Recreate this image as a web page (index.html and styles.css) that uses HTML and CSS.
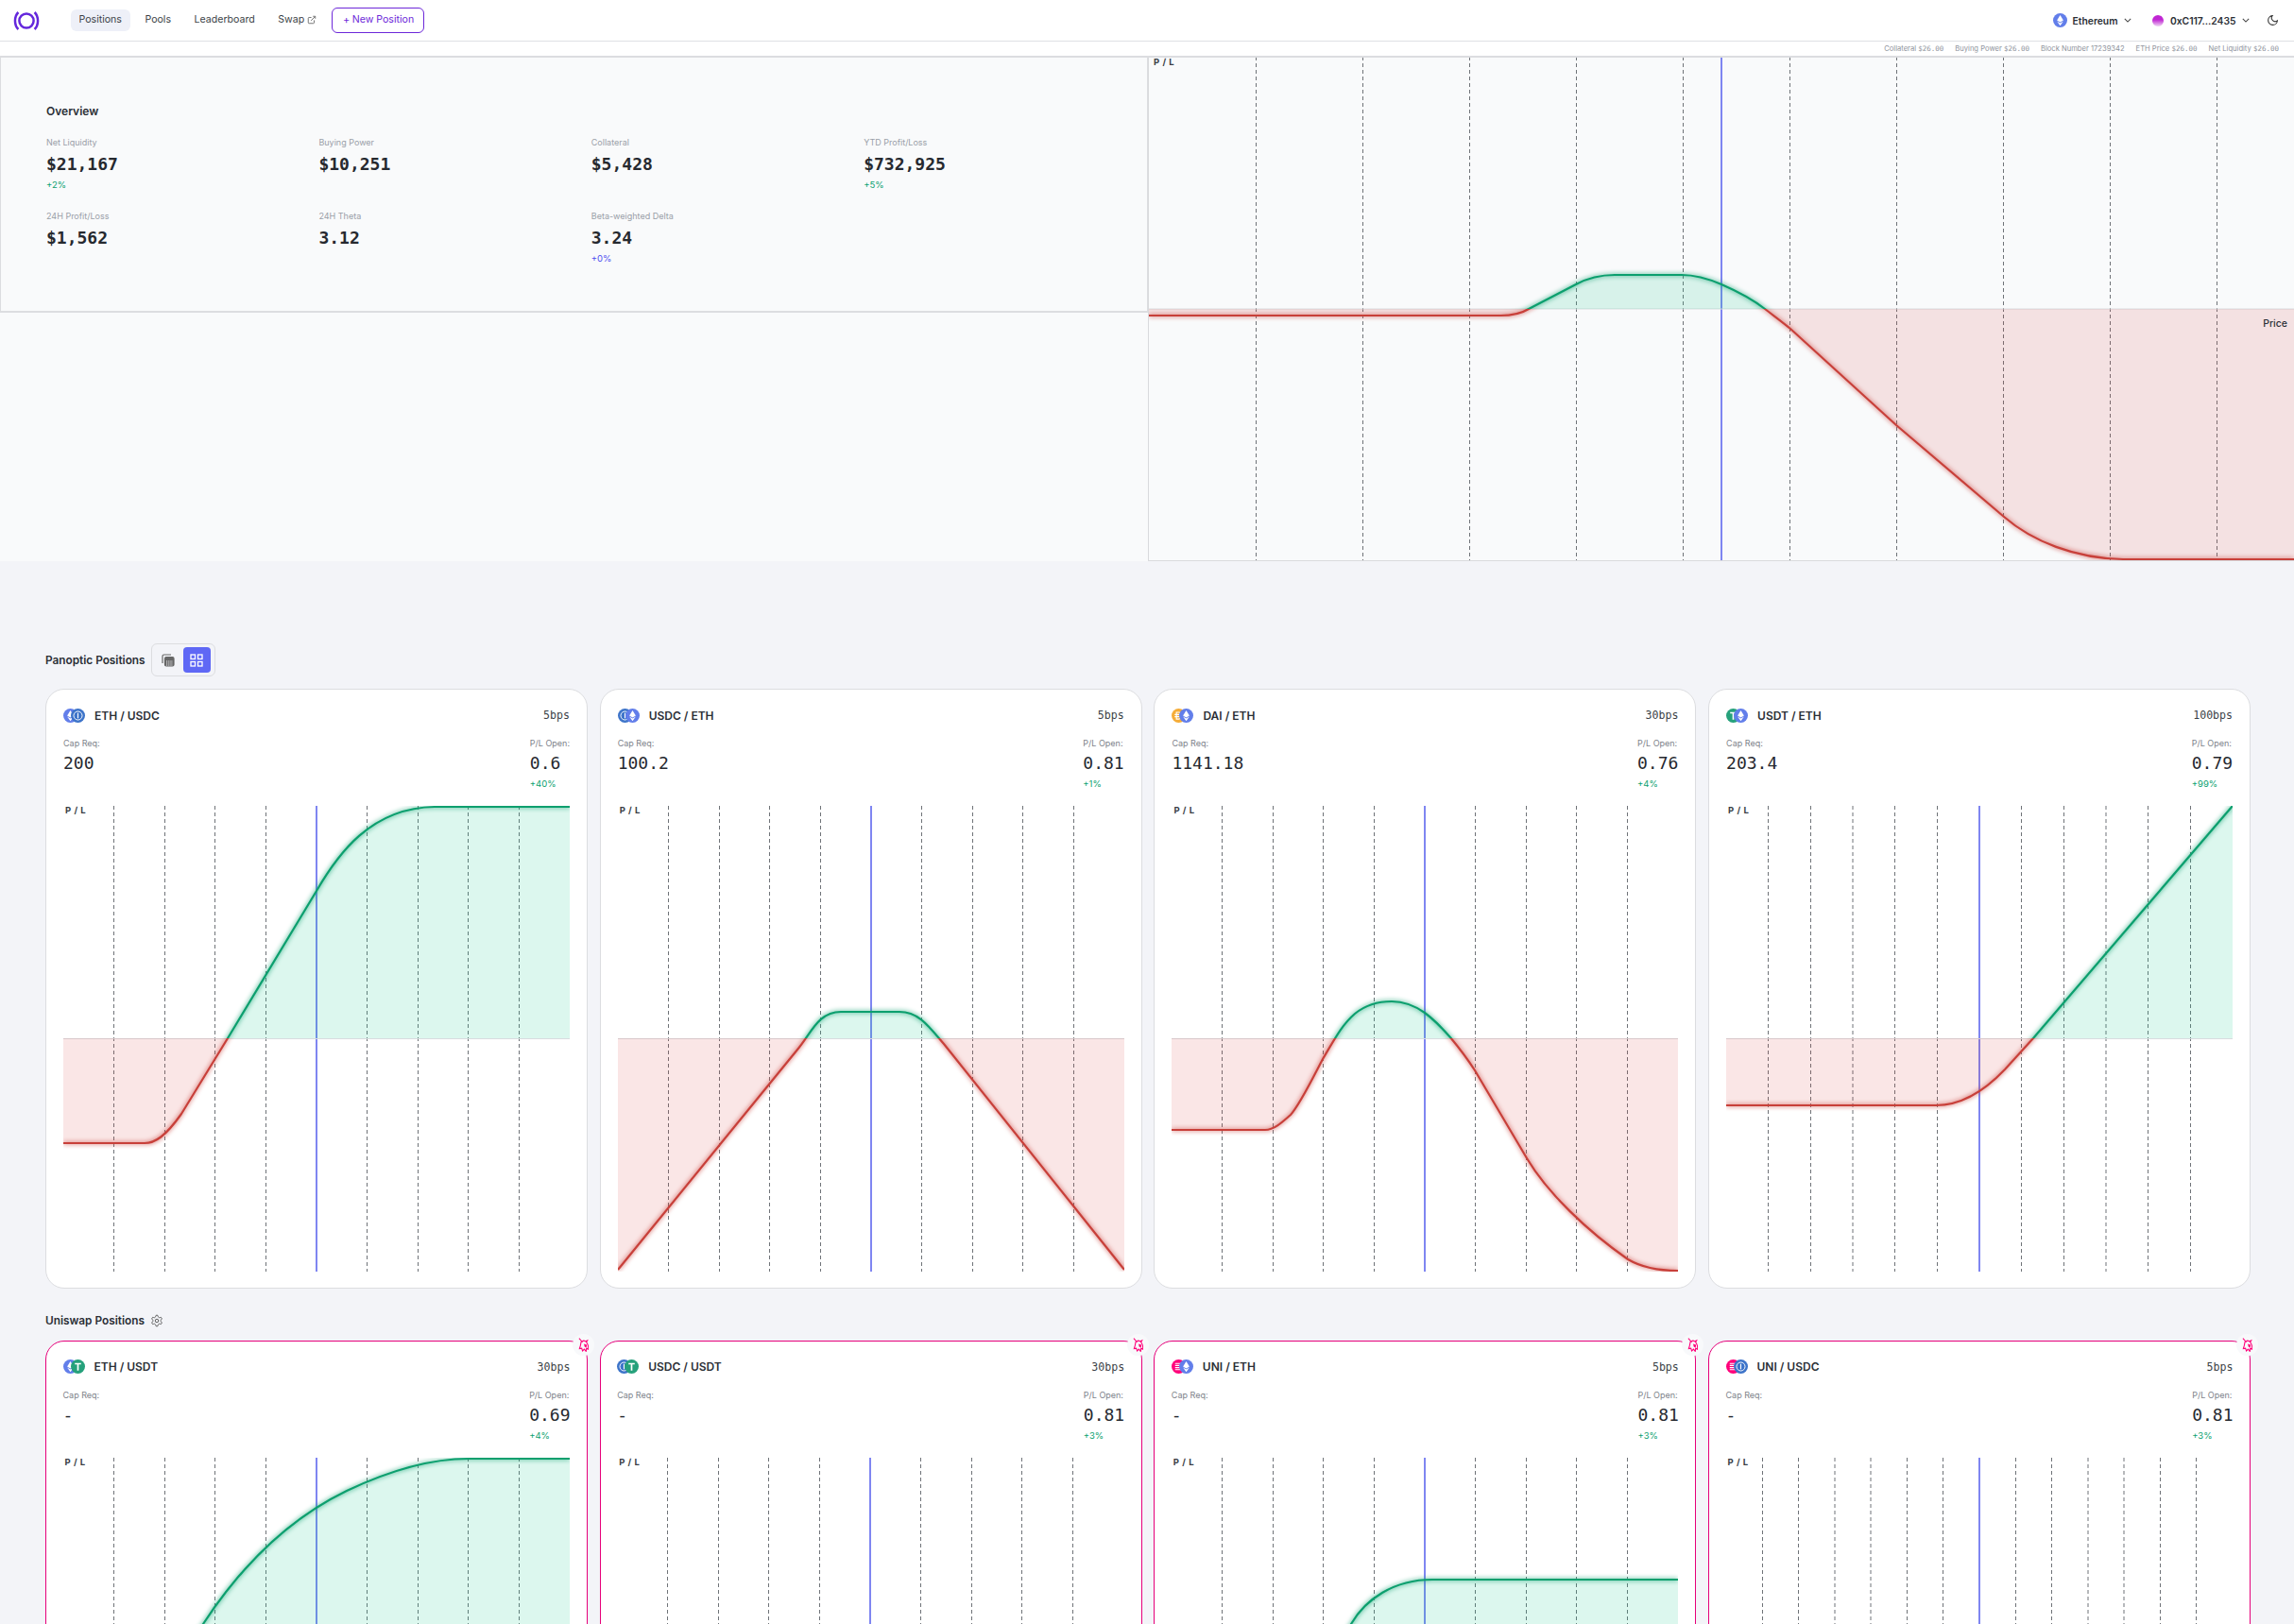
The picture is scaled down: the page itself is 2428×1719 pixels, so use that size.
FILE: index.html
```html
<!DOCTYPE html>
<html lang="en">
<head>
    <meta charset="UTF-8">
    <title>Panoptic Positions</title>
    <link rel="stylesheet" href="styles.css">
</head>
<body>

<!-- shared shapes for the icons and the charts -->
<svg class="defs" aria-hidden="true">
    <defs>
        <clipPath id="clip-up"><rect x="-2" y="-6" width="540" height="252"/></clipPath>
        <clipPath id="clip-down"><rect x="-2" y="246" width="540" height="260"/></clipPath>
        <clipPath id="hero-up"><rect x="-2" y="-6" width="1216" height="273"/></clipPath>
        <clipPath id="hero-down"><rect x="-2" y="267" width="1216" height="280"/></clipPath>

        <g id="axes">
            <path class="now" d="M268 0V493"/>
            <path class="zero" d="M0 246.5H536"/>
        </g>
        <g id="grid">
            <path class="dash" d="M53.5 0V493M107.5 0V493M160.5 0V493M214.5 0V493M321.5 0V493M375.5 0V493M428.5 0V493M482.5 0V493"/>
            <use href="#axes"/>
        </g>
        <g id="grid-12">
            <path class="dash" d="M44.5 0V493M89.5 0V493M134 0V493M178.5 0V493M223.5 0V493M312.5 0V493M357.5 0V493M402 0V493M446.5 0V493M491.5 0V493"/>
            <use href="#axes"/>
        </g>
        <g id="grid-14">
            <path class="dash" d="M38.5 0V493M76.5 0V493M115 0V493M153 0V493M191.5 0V493M229.5 0V493M306.5 0V493M344.5 0V493M383 0V493M421 0V493M459.5 0V493M497.5 0V493"/>
            <use href="#axes"/>
        </g>

        <!-- ETH / USDC -->
        <path id="c1" d="M0 357H86C97 357 108 350 125 326L174 246L268 90C290 52 325 2 393 1H536"/>
        <path id="a1" d="M0 357H86C97 357 108 350 125 326L174 246L268 90C290 52 325 2 393 1H536V246H0Z"/>
        <!-- USDC / ETH -->
        <path id="c2" d="M0 491L190 258C205 240 212 218 236 218H298C318 218 328 232 345 252L536 491"/>
        <path id="a2" d="M0 491L190 258C205 240 212 218 236 218H298C318 218 328 232 345 252L536 491V246H0Z"/>
        <!-- DAI / ETH -->
        <path id="c3" d="M0 343H99C108 343 116 336 126 327C136 316 150 287 160 268C172 248 180 232 194 220C205 211 220 207 233 207C245 207 258 212 268 219C280 228 288 237 295 245C305 257 312 266 321 280L376 373C398 410 440 450 483 480C500 490 518 492 536 492"/>
        <path id="a3" d="M0 343H99C108 343 116 336 126 327C136 316 150 287 160 268C172 248 180 232 194 220C205 211 220 207 233 207C245 207 258 212 268 219C280 228 288 237 295 245C305 257 312 266 321 280L376 373C398 410 440 450 483 480C500 490 518 492 536 492V246H0Z"/>
        <!-- USDT / ETH -->
        <path id="c4" d="M0 317H222C250 317 275 300 295 279L325 246L536 0"/>
        <path id="a4" d="M0 317H222C250 317 275 300 295 279L325 246L536 0V246H0Z"/>
        <!-- ETH / USDT -->
        <path id="c5" d="M100 250L148 176C190 112 240 64 300 35C340 16 385 1 429 1H536"/>
        <path id="a5" d="M100 250L148 176C190 112 240 64 300 35C340 16 385 1 429 1H536V246H0Z"/>
        <!-- UNI / ETH -->
        <path id="c7" d="M100 330L190 176C205 150 235 129 276 129H536"/>
        <path id="a7" d="M100 330L190 176C205 150 235 129 276 129H536V246H0Z"/>
        <!-- overview payoff -->
        <path id="c0" d="M0 274H372C385 274 394 272 402 267L452 241C465 234 478 231 493 231H564C580 231 592 235 606 241C622 248 638 256 652 267C665 277 672 282 679 288L791 390L905 487C935 513 980 531 1031 532H1212"/>
        <path id="a0" d="M0 274H372C385 274 394 272 402 267L452 241C465 234 478 231 493 231H564C580 231 592 235 606 241C622 248 638 256 652 267C665 277 672 282 679 288L791 390L905 487C935 513 980 531 1031 532H1212V267H0Z"/>

        <symbol id="t-eth" viewBox="0 0 16 16">
            <circle cx="8" cy="8" r="8" fill="#627eea"/>
            <path fill="#fff" d="M8 2L4.4 8.1L8 10.2L11.6 8.1ZM4.4 9L8 14L11.6 9L8 11.1Z"/>
        </symbol>
        <symbol id="t-usdc" viewBox="0 0 16 16">
            <circle cx="8" cy="8" r="8" fill="#3d74c9"/>
            <circle cx="8" cy="8" r="4.8" fill="none" stroke="#fff" stroke-width="1"/>
            <path stroke="#fff" stroke-width="1.2" d="M8 5V11"/>
        </symbol>
        <symbol id="t-usdt" viewBox="0 0 16 16">
            <circle cx="8" cy="8" r="8" fill="#26a17b"/>
            <path fill="#fff" d="M4.5 4H11.5V5.6H8.9V12.5H7.1V5.6H4.5Z"/>
        </symbol>
        <symbol id="t-dai" viewBox="0 0 16 16">
            <circle cx="8" cy="8" r="8" fill="#f5ac37"/>
            <path stroke="#fff" stroke-width="1.2" d="M3.5 6.8H12.5M3.5 9.2H12.5"/>
            <path fill="none" stroke="#fff" stroke-width="1.2" d="M5.5 4.2H8C12 4.2 12 11.8 8 11.8H5.5Z"/>
        </symbol>
        <symbol id="t-uni" viewBox="0 0 16 16">
            <circle cx="8" cy="8" r="8" fill="#ff007a"/>
            <path stroke="#fff" stroke-width="1.1" d="M4 4.5H11M4 6.8H10M4 9.2H10M4 11.5H11"/>
        </symbol>
        <symbol id="unicorn" viewBox="0 0 12 16">
            <path fill="none" stroke="#ff007a" stroke-width="1.2" d="M1 .5L5 5M3.5 4L2.5 9L1.5 12.5L4 12L5 15L7 13L9 15.5L9.5 12L11.5 13C12 10 11 7 9.5 5L10.5 3L8.5 4C7 3 5.5 3 4.5 4.5"/>
            <path fill="#ff007a" d="M6.5 7L10 8L9.5 11L7.5 10.5Z"/>
        </symbol>
    </defs>
</svg>

<nav class="navbar">
    <svg class="logo" viewBox="0 0 28 20" fill="none" stroke="#6427dc" stroke-width="2.5">
        <circle cx="14" cy="10" r="7.6"/>
        <path d="M5.4 1C0.8 5.6 0.8 14.4 5.4 19M22.6 1C27.2 5.6 27.2 14.4 22.6 19"/>
    </svg>
    <div class="nav-links">
        <a class="nav-link active">Positions</a>
        <a class="nav-link">Pools</a>
        <a class="nav-link">Leaderboard</a>
        <a class="nav-link">Swap
            <svg class="ext-icon" viewBox="0 0 24 24" fill="none" stroke="#777" stroke-width="2.4"><path d="M18 13v6a2 2 0 0 1-2 2H5a2 2 0 0 1-2-2V8a2 2 0 0 1 2-2h6M15 3h6v6M10 14 21 3"/></svg>
        </a>
        <button class="new-btn"><span class="plus">+</span>New Position</button>
    </div>
    <div class="nav-right">
        <svg class="chain-icon"><use href="#t-eth"/></svg>
        <span class="nav-strong">Ethereum</span>
        <svg class="chevron" viewBox="0 0 10 6" fill="none" stroke="#444" stroke-width="1.3"><path d="M1 1l4 4 4-4"/></svg>
        <span class="avatar"></span>
        <span class="nav-strong">0xC117...2435</span>
        <svg class="chevron" viewBox="0 0 10 6" fill="none" stroke="#444" stroke-width="1.3"><path d="M1 1l4 4 4-4"/></svg>
        <svg class="moon" viewBox="0 0 24 24" fill="none" stroke="#333" stroke-width="2"><path d="M21 12.79A9 9 0 1 1 11.21 3 7 7 0 0 0 21 12.79z"/></svg>
    </div>
</nav>

<div class="subbar">
    <span>Collateral <b>$26.00</b></span>
    <span>Buying Power <b>$26.00</b></span>
    <span>Block Number 17239342</span>
    <span>ETH Price <b>$26.00</b></span>
    <span>Net Liquidity <b>$26.00</b></span>
</div>

<section class="hero">
    <div class="hero-left">
        <div class="overview">
            <h3 class="overview-title">Overview</h3>
            <div class="stats">
                <div class="stat">
                    <div class="stat-label">Net Liquidity</div>
                    <div class="stat-value">$21,167</div>
                    <div class="delta green">+2%</div>
                </div>
                <div class="stat">
                    <div class="stat-label">Buying Power</div>
                    <div class="stat-value">$10,251</div>
                </div>
                <div class="stat">
                    <div class="stat-label">Collateral</div>
                    <div class="stat-value">$5,428</div>
                </div>
                <div class="stat">
                    <div class="stat-label">YTD Profit/Loss</div>
                    <div class="stat-value">$732,925</div>
                    <div class="delta green">+5%</div>
                </div>
                <div class="stat">
                    <div class="stat-label">24H Profit/Loss</div>
                    <div class="stat-value">$1,562</div>
                </div>
                <div class="stat">
                    <div class="stat-label">24H Theta</div>
                    <div class="stat-value">3.12</div>
                </div>
                <div class="stat">
                    <div class="stat-label">Beta-weighted Delta</div>
                    <div class="stat-value">3.24</div>
                    <div class="delta blue">+0%</div>
                </div>
            </div>
        </div>
    </div>
    <div class="hero-chart">
        <span class="pl-label hero-pl">P / L</span>
        <span class="price-label">Price</span>
        <svg class="hero-svg" viewBox="0 1 1212 532">
            <path class="dash" d="M113.5 0V533M226.5 0V533M339.5 0V533M452.5 0V533M565.5 0V533M678.5 0V533M791.5 0V533M904.5 0V533M1017.5 0V533M1130.5 0V533"/>
            <path class="now" d="M606 0V533"/>
            <path class="zero" d="M0 267H1212"/>
            <g clip-path="url(#hero-up)"><use href="#a0" class="area-up"/><use href="#c0" class="line-up"/></g>
            <g clip-path="url(#hero-down)"><use href="#a0" class="area-down"/><use href="#c0" class="line-down"/></g>
        </svg>
    </div>
</section>

<section class="positions panoptic">
    <div class="section-head">
        <h3 class="section-title">Panoptic Positions</h3>
        <div class="toggle">
            <span class="toggle-btn">
                <svg class="toggle-icon" viewBox="0 0 14 14" fill="none" stroke="#666" stroke-width="1.2">
                    <path d="M1 10V2.5A1.5 1.5 0 0 1 2.5 1H10"/>
                    <rect x="3.5" y="3.5" width="9.5" height="9.5" rx="1.5" fill="#666" stroke="#666"/>
                    <path stroke="#f3f4f8" stroke-dasharray="1.2 1" d="M5 8h7M5 10h7M5 12h7"/>
                </svg>
            </span>
            <span class="toggle-btn active">
                <svg class="toggle-icon" viewBox="0 0 14 14" fill="none" stroke="#fff" stroke-width="1.3">
                    <rect x="1" y="1" width="4.5" height="4.5"/>
                    <rect x="8.5" y="1" width="4.5" height="4.5"/>
                    <rect x="1" y="8.5" width="4.5" height="4.5"/>
                    <rect x="8.5" y="8.5" width="4.5" height="4.5"/>
                </svg>
            </span>
        </div>
    </div>
    <div class="card-grid">
        <div class="card">
            <div class="card-head">
                <span class="tokens"><svg class="token"><use href="#t-eth"/></svg><svg class="token"><use href="#t-usdc"/></svg></span>
                <span class="pair">ETH / USDC</span>
                <span class="fee">5bps</span>
            </div>
            <div class="card-stats">
                <div><div class="card-label">Cap Req:</div><div class="card-value">200</div></div>
                <div><div class="card-label">P/L Open:</div><div class="card-value">0.6</div><div class="delta green">+40%</div></div>
            </div>
            <div class="chart">
                <span class="pl-label">P / L</span>
                <svg width="536" height="493" viewBox="0 0 536 493">
                    <use href="#grid"/>
                    <g clip-path="url(#clip-up)"><use href="#a1" class="area-up"/><use href="#c1" class="line-up"/></g>
                    <g clip-path="url(#clip-down)"><use href="#a1" class="area-down"/><use href="#c1" class="line-down"/></g>
                </svg>
            </div>
        </div>
        <div class="card">
            <div class="card-head">
                <span class="tokens"><svg class="token"><use href="#t-usdc"/></svg><svg class="token"><use href="#t-eth"/></svg></span>
                <span class="pair">USDC / ETH</span>
                <span class="fee">5bps</span>
            </div>
            <div class="card-stats">
                <div><div class="card-label">Cap Req:</div><div class="card-value">100.2</div></div>
                <div><div class="card-label">P/L Open:</div><div class="card-value">0.81</div><div class="delta green">+1%</div></div>
            </div>
            <div class="chart">
                <span class="pl-label">P / L</span>
                <svg width="536" height="493" viewBox="0 0 536 493">
                    <use href="#grid"/>
                    <g clip-path="url(#clip-up)"><use href="#a2" class="area-up"/><use href="#c2" class="line-up"/></g>
                    <g clip-path="url(#clip-down)"><use href="#a2" class="area-down"/><use href="#c2" class="line-down"/></g>
                </svg>
            </div>
        </div>
        <div class="card">
            <div class="card-head">
                <span class="tokens"><svg class="token"><use href="#t-dai"/></svg><svg class="token"><use href="#t-eth"/></svg></span>
                <span class="pair">DAI / ETH</span>
                <span class="fee">30bps</span>
            </div>
            <div class="card-stats">
                <div><div class="card-label">Cap Req:</div><div class="card-value">1141.18</div></div>
                <div><div class="card-label">P/L Open:</div><div class="card-value">0.76</div><div class="delta green">+4%</div></div>
            </div>
            <div class="chart">
                <span class="pl-label">P / L</span>
                <svg width="536" height="493" viewBox="0 0 536 493">
                    <use href="#grid"/>
                    <g clip-path="url(#clip-up)"><use href="#a3" class="area-up"/><use href="#c3" class="line-up"/></g>
                    <g clip-path="url(#clip-down)"><use href="#a3" class="area-down"/><use href="#c3" class="line-down"/></g>
                </svg>
            </div>
        </div>
        <div class="card">
            <div class="card-head">
                <span class="tokens"><svg class="token"><use href="#t-usdt"/></svg><svg class="token"><use href="#t-eth"/></svg></span>
                <span class="pair">USDT / ETH</span>
                <span class="fee">100bps</span>
            </div>
            <div class="card-stats">
                <div><div class="card-label">Cap Req:</div><div class="card-value">203.4</div></div>
                <div><div class="card-label">P/L Open:</div><div class="card-value">0.79</div><div class="delta green">+99%</div></div>
            </div>
            <div class="chart">
                <span class="pl-label">P / L</span>
                <svg width="536" height="493" viewBox="0 0 536 493">
                    <use href="#grid-12"/>
                    <g clip-path="url(#clip-up)"><use href="#a4" class="area-up"/><use href="#c4" class="line-up"/></g>
                    <g clip-path="url(#clip-down)"><use href="#a4" class="area-down"/><use href="#c4" class="line-down"/></g>
                </svg>
            </div>
        </div>
    </div>
</section>

<section class="positions uniswap">
    <div class="section-head">
        <h3 class="section-title">Uniswap Positions</h3>
        <svg class="gear" viewBox="0 0 24 24" fill="none" stroke="#555" stroke-width="1.6"><path d="M12.22 2h-.44a2 2 0 0 0-2 2v.18a2 2 0 0 1-1 1.73l-.43.25a2 2 0 0 1-2 0l-.15-.08a2 2 0 0 0-2.73.73l-.22.38a2 2 0 0 0 .73 2.73l.15.1a2 2 0 0 1 1 1.72v.51a2 2 0 0 1-1 1.74l-.15.09a2 2 0 0 0-.73 2.73l.22.38a2 2 0 0 0 2.73.73l.15-.08a2 2 0 0 1 2 0l.43.25a2 2 0 0 1 1 1.73V20a2 2 0 0 0 2 2h.44a2 2 0 0 0 2-2v-.18a2 2 0 0 1 1-1.73l.43-.25a2 2 0 0 1 2 0l.15.08a2 2 0 0 0 2.73-.73l.22-.39a2 2 0 0 0-.73-2.73l-.15-.08a2 2 0 0 1-1-1.74v-.5a2 2 0 0 1 1-1.74l.15-.09a2 2 0 0 0 .73-2.73l-.22-.38a2 2 0 0 0-2.73-.73l-.15.08a2 2 0 0 1-2 0l-.43-.25a2 2 0 0 1-1-1.73V4a2 2 0 0 0-2-2z"/><circle cx="12" cy="12" r="3"/></svg>
    </div>
    <div class="card-grid">
        <div class="card card-uni">
            <span class="uni-badge"><svg class="uni-icon"><use href="#unicorn"/></svg></span>
            <div class="card-head">
                <span class="tokens"><svg class="token"><use href="#t-eth"/></svg><svg class="token"><use href="#t-usdt"/></svg></span>
                <span class="pair">ETH / USDT</span>
                <span class="fee">30bps</span>
            </div>
            <div class="card-stats">
                <div><div class="card-label">Cap Req:</div><div class="card-value">-</div></div>
                <div><div class="card-label">P/L Open:</div><div class="card-value">0.69</div><div class="delta green">+4%</div></div>
            </div>
            <div class="chart">
                <span class="pl-label">P / L</span>
                <svg width="536" height="493" viewBox="0 0 536 493">
                    <use href="#grid"/>
                    <g clip-path="url(#clip-up)"><use href="#a5" class="area-up"/><use href="#c5" class="line-up"/></g>
                </svg>
            </div>
        </div>
        <div class="card card-uni">
            <span class="uni-badge"><svg class="uni-icon"><use href="#unicorn"/></svg></span>
            <div class="card-head">
                <span class="tokens"><svg class="token"><use href="#t-usdc"/></svg><svg class="token"><use href="#t-usdt"/></svg></span>
                <span class="pair">USDC / USDT</span>
                <span class="fee">30bps</span>
            </div>
            <div class="card-stats">
                <div><div class="card-label">Cap Req:</div><div class="card-value">-</div></div>
                <div><div class="card-label">P/L Open:</div><div class="card-value">0.81</div><div class="delta green">+3%</div></div>
            </div>
            <div class="chart">
                <span class="pl-label">P / L</span>
                <svg width="536" height="493" viewBox="0 0 536 493"><use href="#grid"/></svg>
            </div>
        </div>
        <div class="card card-uni">
            <span class="uni-badge"><svg class="uni-icon"><use href="#unicorn"/></svg></span>
            <div class="card-head">
                <span class="tokens"><svg class="token"><use href="#t-uni"/></svg><svg class="token"><use href="#t-eth"/></svg></span>
                <span class="pair">UNI / ETH</span>
                <span class="fee">5bps</span>
            </div>
            <div class="card-stats">
                <div><div class="card-label">Cap Req:</div><div class="card-value">-</div></div>
                <div><div class="card-label">P/L Open:</div><div class="card-value">0.81</div><div class="delta green">+3%</div></div>
            </div>
            <div class="chart">
                <span class="pl-label">P / L</span>
                <svg width="536" height="493" viewBox="0 0 536 493">
                    <use href="#grid"/>
                    <g clip-path="url(#clip-up)"><use href="#a7" class="area-up"/><use href="#c7" class="line-up"/></g>
                </svg>
            </div>
        </div>
        <div class="card card-uni">
            <span class="uni-badge"><svg class="uni-icon"><use href="#unicorn"/></svg></span>
            <div class="card-head">
                <span class="tokens"><svg class="token"><use href="#t-uni"/></svg><svg class="token"><use href="#t-usdc"/></svg></span>
                <span class="pair">UNI / USDC</span>
                <span class="fee">5bps</span>
            </div>
            <div class="card-stats">
                <div><div class="card-label">Cap Req:</div><div class="card-value">-</div></div>
                <div><div class="card-label">P/L Open:</div><div class="card-value">0.81</div><div class="delta green">+3%</div></div>
            </div>
            <div class="chart">
                <span class="pl-label">P / L</span>
                <svg width="536" height="493" viewBox="0 0 536 493"><use href="#grid-14"/></svg>
            </div>
        </div>
    </div>
</section>

</body>
</html>
```

FILE: styles.css
```css
* {
    box-sizing: border-box;
}

body {
    margin: 0;
    height: 100vh;
    overflow: hidden;
    background: #f3f4f8;
    color: #2b2f36;
    font-family: Inter, "Noto Sans", sans-serif;
}

.defs {
    position: absolute;
    width: 0;
    height: 0;
}

/* top bar */
.navbar {
    display: flex;
    align-items: center;
    height: 44px;
    padding: 0 16px 0 14px;
    background: #fff;
    border-bottom: 1px solid #dfe1e5;
}

.logo {
    width: 28px;
    height: 20px;
    margin-right: 32.5px;
}

.nav-links {
    display: flex;
    align-items: center;
    gap: 6.5px;
}

.nav-link {
    display: flex;
    align-items: center;
    gap: 3px;
    height: 23px;
    padding: 0 9px 2px;
    border-radius: 6px;
    font-size: 10.6px;
    color: #3b3f46;
}

.nav-link.active {
    background: #eef0f8;
}

.ext-icon {
    width: 10px;
    height: 10px;
}

.new-btn {
    display: flex;
    align-items: center;
    width: 98px;
    height: 27px;
    padding: 0 0 2px 9px;
    background: #fff;
    border: 1.5px solid #6d28d9;
    border-radius: 6px;
    color: #6d28d9;
    font-family: inherit;
    font-size: 10.6px;
}

.plus {
    width: 12px;
    font-size: 11px;
}

.nav-right {
    display: flex;
    align-items: center;
    margin-left: auto;
}

.chain-icon {
    width: 15px;
    height: 15px;
    margin-right: 6px;
}

.nav-strong {
    font-size: 10.3px;
    font-weight: 600;
    color: #2b2f36;
}

.chevron {
    width: 8px;
    height: 5px;
    margin: 0 22px 0 6.5px;
}

.avatar {
    width: 12px;
    height: 12px;
    margin-right: 7px;
    border-radius: 50%;
    background: linear-gradient(180deg, #c026d3 40%, #f0d8f4);
}

.moon {
    width: 13px;
    height: 13px;
    margin-left: -4px;
}

.subbar {
    display: flex;
    justify-content: flex-end;
    align-items: center;
    gap: 12px;
    height: 17px;
    padding-right: 16px;
    background: #fff;
    border-bottom: 2px solid #dcdde0;
    font-size: 7.6px;
    color: #8f949d;
}

.subbar b {
    font-family: "DejaVu Sans Mono", monospace;
    font-size: 7.5px;
    font-weight: 400;
}

/* overview + large chart */
.hero {
    display: grid;
    grid-template-columns: 1215px 1fr;
    height: 533px;
    background: #f9fafb;
}

.overview {
    height: 270px;
    padding: 49px 0 0 48px;
    border-left: 1px solid #dcdde0;
    border-right: 1px solid #dcdde0;
    border-bottom: 2px solid #dcdde0;
}

.overview-title {
    margin: 0 0 19px;
    font-size: 12px;
    font-weight: 600;
    line-height: 16px;
}

.stats {
    display: grid;
    grid-template-columns: repeat(4, 288.4px);
    grid-auto-rows: 78px;
}

.stat-label {
    font-size: 9px;
    line-height: 12px;
    color: #9a9fa8;
}

.stat-value {
    margin-top: 6px;
    font-family: "DejaVu Sans Mono", monospace;
    font-size: 18px;
    font-weight: 700;
    line-height: 22px;
    color: #26292f;
}

.delta {
    margin-top: 5px;
    font-size: 9.5px;
    line-height: 12px;
}

.green {
    color: #0b9f70;
}

.blue {
    color: #4f4ff0;
}

.hero-chart {
    position: relative;
    border-left: 1px solid #d9dadd;
    border-bottom: 1px solid #d9dadd;
    overflow: hidden;
}

.hero-svg {
    display: block;
    width: 1212px;
    height: 532px;
}

.pl-label {
    position: absolute;
    top: -1px;
    left: 2px;
    z-index: 1;
    font-size: 9.5px;
    font-weight: 700;
    letter-spacing: 0.5px;
    line-height: 12px;
    color: #3b3f46;
}

.hero-pl {
    top: 0;
    left: 5px;
    line-height: 9px;
}

.price-label {
    position: absolute;
    top: 275px;
    right: 7px;
    z-index: 1;
    font-size: 10.5px;
    font-weight: 500;
    color: #2b2f36;
}

/* chart strokes */
.dash {
    fill: none;
    stroke: #6f7378;
    stroke-width: 1;
    stroke-dasharray: 4 3;
}

.now {
    fill: none;
    stroke: #5f68ee;
    stroke-width: 1.6;
}

.zero {
    fill: none;
    stroke: #d9dcdf;
    stroke-width: 1;
}

.area-up {
    fill: rgba(20, 200, 140, 0.15);
}

.area-down {
    fill: rgba(214, 48, 49, 0.12);
}

.line-up,
.line-down {
    fill: none;
    stroke-width: 2.2;
}

.line-up {
    stroke: #0c9f6e;
    filter: drop-shadow(0 0 2.5px #0c9f6e);
}

.line-down {
    stroke: #c8403a;
    filter: drop-shadow(0 0 2.5px #c8403a);
}

/* position sections */
.positions {
    padding: 0 46px 0 48px;
}

.panoptic {
    padding-top: 87px;
}

.uniswap {
    padding-top: 26px;
}

.section-head {
    display: flex;
    align-items: center;
    gap: 6px;
    margin-bottom: 13px;
}

.section-title {
    margin: 0;
    font-size: 11.8px;
    font-weight: 600;
    line-height: 16px;
    color: #2b2f36;
}

.toggle {
    display: flex;
    align-items: center;
    gap: 1px;
    width: 68px;
    height: 35px;
    padding: 3px;
    border: 1px solid #dcdde0;
    border-radius: 6px;
}

.toggle-btn {
    display: flex;
    align-items: center;
    justify-content: center;
    width: 29px;
    height: 27px;
    border-radius: 4px;
}

.toggle-btn.active {
    background: #5f68f5;
}

.toggle-icon {
    width: 14px;
    height: 14px;
}

.gear {
    width: 14px;
    height: 14px;
}

.card-grid {
    display: grid;
    grid-template-columns: repeat(4, 1fr);
    gap: 12.7px;
}

.card {
    position: relative;
    height: 635px;
    padding: 18px;
    background: #fff;
    border: 1px solid #dcdde0;
    border-radius: 20px;
}

.card-uni {
    padding: 17.5px;
    border: 1.5px solid #e6007a;
}

.uni-badge {
    position: absolute;
    top: -8.5px;
    right: -8.5px;
    display: flex;
    align-items: center;
    justify-content: center;
    width: 23px;
    height: 23px;
    border-radius: 50%;
    background: #f8f9fb;
}

.uni-icon {
    width: 11px;
    height: 15px;
}

.card-head {
    display: flex;
    align-items: center;
    height: 18px;
}

.tokens {
    display: flex;
    width: 33px;
}

.token {
    width: 15px;
    height: 15px;
}

.token + .token {
    margin-left: -7px;
}

.pair {
    font-size: 12px;
    font-weight: 600;
    color: #2b2f36;
}

.fee {
    margin-left: auto;
    font-family: "DejaVu Sans Mono", monospace;
    font-size: 11.6px;
    color: #3b3f46;
}

.card-stats {
    display: flex;
    justify-content: space-between;
    height: 55px;
    margin-top: 15px;
}

.card-label {
    font-size: 9px;
    line-height: 12px;
    color: #7d828a;
}

.card-value {
    margin-top: 4px;
    font-family: "DejaVu Sans Mono", monospace;
    font-size: 18px;
    line-height: 22px;
    color: #26292f;
}

.chart {
    position: relative;
    margin-top: 17px;
}

.chart svg {
    display: block;
}
```
